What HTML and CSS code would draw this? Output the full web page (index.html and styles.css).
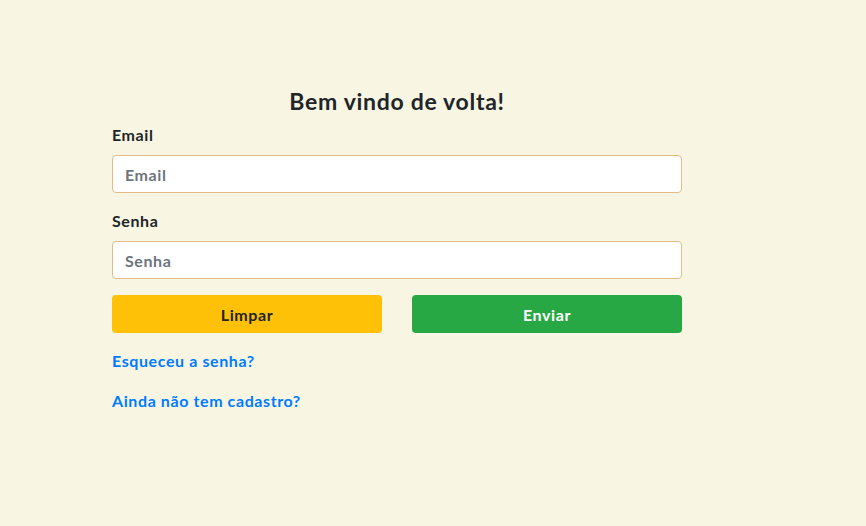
FILE: index.html
```html
<!DOCTYPE html>
<html lang="pt-BR">
<head>
<meta charset="utf-8">
<title>Login</title>
<link rel="stylesheet" href="styles.css">
</head>
<body>
<main class="page">
  <form class="login">
    <h1 class="title">Bem vindo de volta!</h1>
    <label class="label" for="email">Email</label>
    <input class="field" id="email" type="email" placeholder="Email">
    <label class="label" for="senha">Senha</label>
    <input class="field" id="senha" type="password" placeholder="Senha">
    <div class="actions">
      <button type="reset" class="btn btn-clear">Limpar</button>
      <button type="submit" class="btn btn-send">Enviar</button>
    </div>
    <a class="link" href="#">Esqueceu a senha?</a>
    <a class="link" href="#">Ainda não tem cadastro?</a>
  </form>
</main>
</body>
</html>
```
FILE: styles.css
```css
* { box-sizing: border-box; }
html, body {
  margin: 0;
  height: 100%;
  background: #f8f6e3;
}
body {
  font-family: Lato, "Open Sans", sans-serif;
  color: #212529;
  letter-spacing: 0.6px;
}
.page {
  padding: 88px 0 0 112px;
}
.login {
  width: 570px;
  display: flex;
  flex-direction: column;
}
.title {
  margin: 0 0 8px;
  font-size: 23px;
  line-height: 27px;
  font-weight: 700;
  text-align: center;
  letter-spacing: 0.7px;
}
.label {
  font-size: 16px;
  line-height: 24px;
  font-weight: 700;
  margin-bottom: 8px;
}
.field {
  height: 38px;
  padding: 6px 12px;
  border: 1px solid #e2bb85;
  border-radius: 4px;
  background: #fff;
  font-family: inherit;
  font-size: 16px;
  font-weight: 700;
  letter-spacing: 0.6px;
  color: #495057;
  margin: 0 0 16px;
}
.field::placeholder { color: #6c757d; }
.actions {
  display: grid;
  grid-template-columns: 1fr 1fr;
  gap: 30px;
}
.btn {
  height: 38px;
  border: 0;
  border-radius: 4px;
  font-family: inherit;
  font-size: 16px;
  font-weight: 700;
  letter-spacing: 0.6px;
}
.btn-clear { background: #ffc107; color: #212529; }
.btn-send { background: #28a745; color: #fff; }
.link {
  align-self: flex-start;
  margin-top: 16px;
  font-size: 16px;
  line-height: 24px;
  font-weight: 700;
  color: #007bff;
  text-decoration: none;
}
.link + .link { margin-top: 16px; }
```
